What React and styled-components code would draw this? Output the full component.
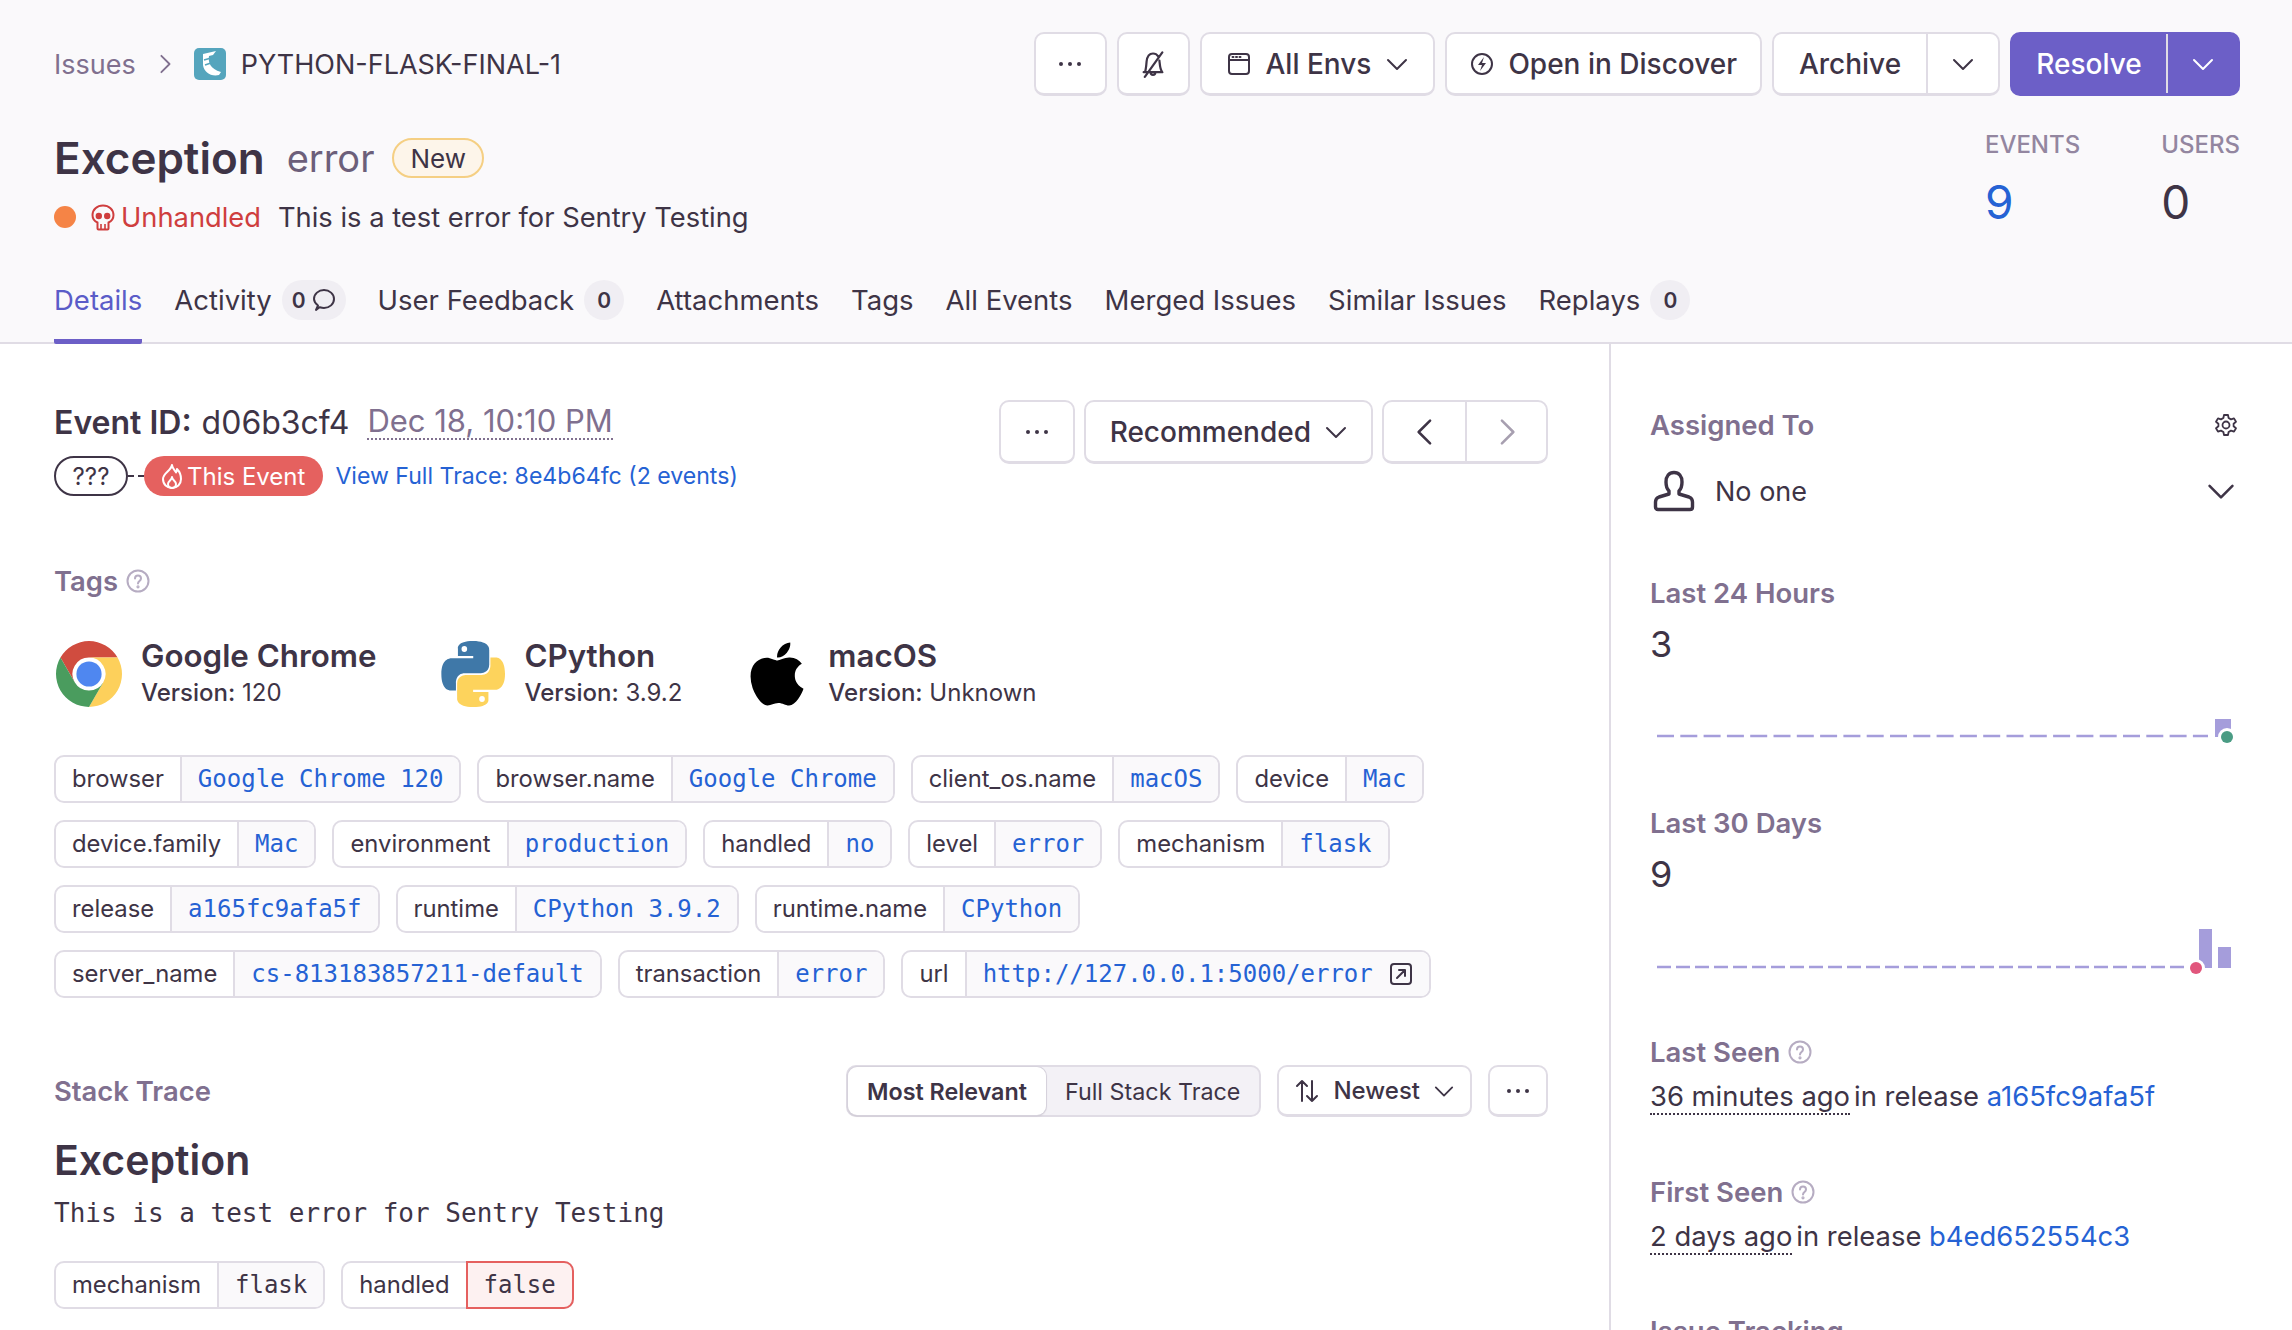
import React from 'react'
import styled, { createGlobalStyle } from 'styled-components'
import { FaApple } from 'react-icons/fa'

const text = '#3e3446'
const sub = '#80708f'
const line = '#e0dce5'
const blue = '#2562d4'
const purple = '#6c5fc7'
const mono = `'DejaVu Sans Mono', 'Liberation Mono', monospace`

const Global = createGlobalStyle`
  html, body { margin: 0; padding: 0; background: #fff; }
  body { font-family: Inter, Roboto, sans-serif; color: ${text}; }
  * { box-sizing: border-box; }
`

const Page = styled.div`
  width: 2292px;
  height: 1330px;
  overflow: hidden;
  display: flex;
  flex-direction: column;
`
const Header = styled.header`
  height: 344px;
  flex: none;
  background: #faf9fb;
  border-bottom: 2px solid ${line};
  padding: 32px 52px 0 54px;
  display: flex;
  flex-direction: column;
`
const TopRow = styled.div`
  display: flex;
  justify-content: space-between;
  align-items: center;
  height: 64px;
`
const Crumbs = styled.div`
  display: flex;
  align-items: center;
  gap: 19px;
  font-size: 27px;
`
const CrumbLink = styled.span`
  color: ${sub};
`
const CrumbTitle = styled.span`
  margin-left: -4px;
`
const Actions = styled.div`
  display: flex;
  gap: 10px;
`
const Button = styled.div`
  height: ${p => p.$h || 64}px;
  width: ${p => (p.$w ? `${p.$w}px` : 'auto')};
  padding: 0 ${p => (p.$w ? 0 : p.$pad || 22)}px;
  display: flex;
  align-items: center;
  justify-content: center;
  gap: ${p => p.$gap || 14}px;
  background: #fff;
  border: 2px solid ${line};
  border-bottom-width: 3px;
  border-radius: 10px;
  font-size: ${p => p.$fs || 28}px;
  font-weight: 500;
  color: ${text};
  white-space: nowrap;
`
const Split = styled.div`
  display: flex;
  height: 64px;
  border: 2px solid ${p => (p.$primary ? purple : line)};
  border-bottom-width: 3px;
  border-radius: 10px;
  overflow: hidden;
  background: ${p => (p.$primary ? purple : '#fff')};
  color: ${p => (p.$primary ? '#fff' : text)};
  font-size: 28px;
  font-weight: 500;
`
const SplitPart = styled.div`
  width: ${p => p.$w}px;
  display: flex;
  align-items: center;
  justify-content: center;
  color: ${p => (p.$muted ? '#a79fb0' : 'inherit')};
  & + & {
    border-left: 2px solid ${p => (p.$dark ? '#5b4fb0' : line)};
  }
`
const TitleRow = styled.div`
  display: flex;
  justify-content: space-between;
  margin-top: 28px;
`
const TitleStack = styled.div`
  display: flex;
  flex-direction: column;
  padding-top: 12px;
`
const TitleLine = styled.div`
  display: flex;
  align-items: center;
  height: 44px;
`
const Title = styled.h1`
  margin: 0;
  font-size: 44px;
  font-weight: 600;
  line-height: 44px;
`
const TitleType = styled.span`
  margin-left: 22px;
  font-size: 38px;
  color: #6c5f7a;
`
const NewBadge = styled.span`
  margin-left: 18px;
  height: 40px;
  padding: 0 16px;
  display: flex;
  align-items: center;
  border: 2px solid #f5cf83;
  border-radius: 20px;
  background: #fdf5ea;
  font-size: 26px;
`
const MessageLine = styled.div`
  display: flex;
  align-items: center;
  height: 40px;
  margin-top: 17px;
  font-size: 27.3px;
`
const Dot = styled.span`
  width: 22px;
  height: 22px;
  border-radius: 50%;
  background: #f58446;
`
const Unhandled = styled.span`
  display: flex;
  align-items: center;
  gap: 6px;
  margin-left: 15px;
  color: #cf3e3e;
`
const MessageText = styled.span`
  margin-left: 17px;
`
const Stats = styled.div`
  display: flex;
  gap: 81px;
  margin-top: 6px;
`
const Stat = styled.div`
  display: flex;
  flex-direction: column;
`
const StatLabel = styled.span`
  font-size: 24px;
  font-weight: 500;
  color: #9386a0;
  line-height: 30px;
`
const StatValue = styled.span`
  margin-top: 14px;
  font-size: 46px;
  line-height: 56px;
  color: ${p => (p.$link ? blue : text)};
`
const Tabs = styled.nav`
  display: flex;
  gap: 32px;
  margin-top: auto;
  height: 79px;
  margin-bottom: -2px;
`
const Tab = styled.div`
  display: flex;
  align-items: center;
  height: 79px;
  padding-bottom: 4px;
  font-size: 27.5px;
  white-space: nowrap;
  color: ${p => (p.$active ? '#5a5cc8' : text)};
  border-bottom: ${p => (p.$active ? `5px solid ${purple}` : '5px solid transparent')};
  border-radius: 0 0 2px 2px;
`
const TabChip = styled.span`
  margin-left: 10px;
  height: 40px;
  min-width: 40px;
  padding: 0 10px;
  display: flex;
  align-items: center;
  justify-content: center;
  gap: 6px;
  border-radius: 20px;
  background: #f0eef3;
  font-size: 21px;
  font-weight: 600;
`
const Body = styled.div`
  flex: 1;
  display: flex;
  min-height: 0;
`
const Main = styled.main`
  width: 1611px;
  flex: none;
  border-right: 2px solid ${line};
  padding: 0 61px 0 54px;
`
const EventBar = styled.div`
  display: flex;
  justify-content: space-between;
  margin-top: 56px;
  height: 96px;
`
const EventInfo = styled.div`
  display: flex;
  flex-direction: column;
  padding-top: 1px;
`
const EventLine = styled.div`
  display: flex;
  align-items: center;
  height: 42px;
  font-size: 32px;
`
const EventLabel = styled.b`
  font-weight: 600;
`
const EventId = styled.span`
  margin-left: 10px;
`
const EventDate = styled.span`
  margin-left: 18px;
  font-size: 31px;
  color: ${sub};
  border-bottom: 2px dotted ${sub};
  line-height: 34px;
`
const TraceLine = styled.div`
  display: flex;
  align-items: center;
  height: 40px;
  margin-top: 13px;
  font-size: 24px;
`
const UnknownPill = styled.span`
  width: 74px;
  height: 40px;
  display: flex;
  align-items: center;
  justify-content: center;
  border: 2px solid ${text};
  border-radius: 20px;
`
const Connector = styled.span`
  width: 16px;
  border-top: 2px dashed ${text};
`
const EventPill = styled.span`
  height: 40px;
  padding: 0 18px;
  display: flex;
  align-items: center;
  gap: 5px;
  border-radius: 20px;
  background: #e5615f;
  color: #fff;
`
const Link = styled.span`
  color: ${blue};
`
const TraceLink = styled(Link)`
  margin-left: 12px;
  font-size: 23.1px;
`
const EventButtons = styled.div`
  display: flex;
  gap: 9px;
`
const SectionHead = styled.h3`
  margin: ${p => p.$top}px 0 0;
  display: flex;
  align-items: center;
  gap: 8px;
  height: 32px;
  font-size: 27.4px;
  font-weight: 600;
  color: ${sub};
`
const Contexts = styled.div`
  display: flex;
  margin-top: 43px;
  height: 68px;
`
const Context = styled.div`
  display: flex;
  align-items: center;
  gap: ${p => p.$gap}px;
  margin-right: ${p => p.$mr}px;
  margin-left: ${p => p.$ml || 0}px;
`
const ContextText = styled.div`
  display: flex;
  flex-direction: column;
`
const ContextName = styled.span`
  font-size: 31.3px;
  font-weight: 600;
  line-height: 38px;
`
const ContextVersion = styled.span`
  font-size: 24px;
  line-height: 36px;
  & b { font-weight: 500; }
`
const TagList = styled.div`
  display: flex;
  flex-wrap: wrap;
  gap: 17px 16px;
  margin-top: ${p => p.$top}px;
`
const TagChip = styled.div`
  display: flex;
  height: 48px;
  border: 2px solid ${line};
  border-radius: 10px;
  overflow: hidden;
  font-size: 23.8px;
  line-height: 44px;
`
const TagKey = styled.span`
  padding: 0 16px;
  border-right: 2px solid ${line};
  white-space: nowrap;
`
const TagValue = styled.span`
  padding: 0 16px;
  display: flex;
  align-items: center;
  gap: 16px;
  background: #faf9fb;
  font-family: ${mono};
  font-size: 24px;
  color: ${blue};
  white-space: nowrap;
`
const PlainValue = styled(TagValue)`
  color: ${text};
`
const ErrorChip = styled(TagChip)`
  overflow: visible;
`
const ErrorKey = styled(TagKey)`
  border-right: 0;
`
const ErrorValue = styled(TagValue)`
  color: ${text};
  background: #fdf1f1;
  margin: -2px -2px -2px 0;
  height: 48px;
  padding: 0 16px;
  border: 2px solid #e5605f;
  border-radius: 0 10px 10px 0;
`
const TraceBar = styled.div`
  display: flex;
  align-items: center;
  justify-content: space-between;
  margin-top: 67px;
  height: 52px;
`
const TraceHead = styled(SectionHead)`
  margin: 0;
`
const TraceTools = styled.div`
  display: flex;
  gap: 16px;
`
const Segment = styled.div`
  display: flex;
  height: 52px;
  border: 2px solid ${line};
  border-radius: 10px;
  background: #f3f1f6;
  font-size: 23.3px;
`
const SegmentItem = styled.div`
  display: flex;
  align-items: center;
  padding: 0 19px;
  font-weight: ${p => (p.$on ? 600 : 400)};
  background: ${p => (p.$on ? '#fff' : 'transparent')};
  border-radius: 9px;
  box-shadow: ${p => (p.$on ? '0 0 0 1px #d6d2dc, 0 1px 2px rgba(43,34,51,.2)' : 'none')};
`
const ExceptionTitle = styled.h2`
  margin: 19px 0 0;
  font-size: 41px;
  font-weight: 600;
  line-height: 48px;
`
const ExceptionMessage = styled.p`
  margin: 12px 0 0;
  font-family: ${mono};
  font-size: 26px;
  line-height: 34px;
`
const Side = styled.aside`
  flex: 1;
  padding: 0 52px 0 39px;
`
const SideSection = styled.section`
  margin-top: ${p => p.$top}px;
`
const SideHead = styled.div`
  display: flex;
  align-items: center;
  justify-content: space-between;
  height: 32px;
  padding-right: 2px;
`
const SideTitle = styled.span`
  display: flex;
  align-items: center;
  gap: 8px;
  font-size: 27.5px;
  font-weight: 600;
  color: ${sub};
`
const Assignee = styled.div`
  display: flex;
  align-items: center;
  height: 44px;
  margin-top: 28px;
  padding: 0 5px 0 3px;
  font-size: 27px;
`
const AssigneeName = styled.span`
  margin-left: 20px;
  flex: 1;
`
const SideCount = styled.div`
  margin-top: 13px;
  font-size: 36px;
  line-height: 44px;
`
const Sparkline = styled.svg`
  display: block;
  margin-top: ${p => p.$top}px;
`
const SeenLine = styled.div`
  margin-top: 11px;
  font-size: 27.4px;
  line-height: 34px;
  white-space: nowrap;
`
const Ago = styled.span`
  border-bottom: 2px dotted ${text};
  margin-right: 4px;
`
const Icon = styled.svg`
  flex: none;
  display: block;
`

const Chevron = ({ dir = 'down', size = 22, color = 'currentColor' }) => {
  const d = {
    down: 'M2 7 L11 16 L20 7',
    left: 'M15 2 L6 11 L15 20',
    right: 'M7 2 L16 11 L7 20',
  }[dir]
  return (
    <Icon width={size} height={size} viewBox="0 0 22 22" fill="none" stroke={color} strokeWidth="2" strokeLinecap="round" strokeLinejoin="round">
      <path d={d} />
    </Icon>
  )
}
const Ellipsis = () => (
  <Icon width="24" height="6" viewBox="0 0 24 6" fill={text}>
    <circle cx="3" cy="3" r="2" /><circle cx="12" cy="3" r="2" /><circle cx="21" cy="3" r="2" />
  </Icon>
)
const BellOff = () => (
  <Icon width="28" height="28" viewBox="0 0 24 24" fill="none" stroke={text} strokeWidth="1.9" strokeLinecap="round" strokeLinejoin="round">
    <path d="M5 19 C6 17 6 15 6.5 10 C7 5 9 3 12 3 C14 3 15.5 4 16.5 5.5 M17.5 9 C18 14 18 17 20 19 H4 M10 19 C10 22 14 22 14 19 M20 2 L5 23" />
  </Icon>
)
const Calendar = () => (
  <Icon width="24" height="24" viewBox="0 0 24 24" fill="none" stroke={text} strokeWidth="2">
    <rect x="2" y="2" width="20" height="20" rx="3" />
    <path d="M2 8 H22" />
    <path d="M5.5 5 H6.5 M9 5 H10 M12.5 5 H13.5" strokeLinecap="round" />
  </Icon>
)
const Discover = () => (
  <Icon width="24" height="24" viewBox="0 0 24 24" fill="none" stroke={text} strokeWidth="2">
    <circle cx="12" cy="12" r="10" />
    <path d="M14 5 L8 13 H12 L10 19 L16 11 H12 Z" fill={text} stroke="none" />
  </Icon>
)
const Skull = () => (
  <Icon width="24" height="27" viewBox="0 0 24 27" fill="none" stroke="#cf3e3e" strokeWidth="2" strokeLinejoin="round">
    <path d="M12 1.5 C6 1.5 1.5 5.5 1.5 11 C1.5 14.5 3 17 6.5 18.5 V24.5 C6.5 25 7 25.5 7.5 25.5 H16.5 C17 25.5 17.5 25 17.5 24.5 V18.5 C21 17 22.5 14.5 22.5 11 C22.5 5.5 18 1.5 12 1.5 Z" />
    <circle cx="7.8" cy="12" r="2.2" fill="#cf3e3e" />
    <circle cx="16.2" cy="12" r="2.2" fill="#cf3e3e" />
    <path d="M10 20 V25 M14 20 V25" strokeWidth="1.6" />
  </Icon>
)
const Comment = () => (
  <Icon width="24" height="24" viewBox="0 0 24 24" fill="none" stroke={text} strokeWidth="2" strokeLinejoin="round">
    <path d="M4 22 L6 17.5 C3.5 15.5 2 13.5 2 11 C2 6 6.5 2 12 2 C17.5 2 22 6 22 11 C22 16 17.5 20 12 20 C10 20 8.5 19.5 7.5 19.2 Z" />
  </Icon>
)
const Flame = () => (
  <Icon width="20" height="25" viewBox="0 0 20 25" fill="none" stroke="#fff" strokeWidth="2" strokeLinejoin="round">
    <path d="M10 1 C10.5 5 13 6 14 8.5 C15 7 15 6 15 5 C18 8 19 12 19 15 C19 20.5 15 24 10 24 C5 24 1 20.5 1 15 C1 9 9 7 10 1 Z" />
    <path d="M10 13 C10 16 14 17 14 20 C14 22.5 12 24 10 24 C8 24 6 22.5 6 20 C6 17 10 16 10 13 Z" />
  </Icon>
)
const Help = ({ size = 24 }) => (
  <Icon width={size} height={size} viewBox="0 0 24 24" fill="none" stroke="#b6acc2" strokeWidth="2" strokeLinecap="round">
    <circle cx="12" cy="12" r="10.5" />
    <path d="M9 9.5 C9 7.5 10.5 6.5 12 6.5 C13.5 6.5 15 7.5 15 9.5 C15 12 12 12 12 14.5" />
    <circle cx="12" cy="17.8" r="0.6" />
  </Icon>
)
const Sort = () => (
  <Icon width="24" height="24" viewBox="0 0 24 24" fill="none" stroke={text} strokeWidth="2" strokeLinecap="round" strokeLinejoin="round">
    <path d="M7 22 V2 M2 7 L7 2 L12 7 M17 2 V22 M12 17 L17 22 L22 17" />
  </Icon>
)
const OpenLink = () => (
  <Icon width="24" height="24" viewBox="0 0 24 24" fill="none" stroke={text} strokeWidth="2" strokeLinecap="round" strokeLinejoin="round">
    <rect x="2" y="2" width="20" height="20" rx="3" />
    <path d="M8 16 L16 8 M10 8 H16 V14" />
  </Icon>
)
const Gear = () => (
  <Icon width="24" height="24" viewBox="0 0 24 24" fill="none" stroke={text} strokeWidth="1.8" strokeLinejoin="round">
    <path d="M10 2 H14 L14.6 5 L17 6.4 L20 5.4 L22 8.8 L19.6 10.8 V13.2 L22 15.2 L20 18.6 L17 17.6 L14.6 19 L14 22 H10 L9.4 19 L7 17.6 L4 18.6 L2 15.2 L4.4 13.2 V10.8 L2 8.8 L4 5.4 L7 6.4 L9.4 5 Z" />
    <circle cx="12" cy="12" r="3.5" />
  </Icon>
)
const User = () => (
  <Icon width="42" height="42" viewBox="0 0 42 42" fill="none" stroke={text} strokeWidth="3.4" strokeLinejoin="round">
    <path d="M13 12 C13 6 16 2.5 21 2.5 C26 2.5 29 6 29 12 C29 16 28 19 26 21 V24 L36 27 C38.5 28 39.5 29.5 39.5 32 V37 C39.5 38.5 38.5 39.5 37 39.5 H5 C3.5 39.5 2.5 38.5 2.5 37 V32 C2.5 29.5 3.5 28 6 27 L16 24 V21 C14 19 13 16 13 12 Z" />
  </Icon>
)
const FlaskLogo = () => (
  <Icon width="32" height="32" viewBox="0 0 32 32">
    <rect width="32" height="32" rx="5" fill="#55a5bd" />
    <path d="M9 6 L22 3 L19 7 L15 8 C14 14 16 21 27 24 L25 27 C17 29 10 24 9 17 Z" fill="#fff" />
    <path d="M10 12 L17 10 M11 17 L17 15" stroke="#55a5bd" strokeWidth="1.6" />
  </Icon>
)
const ChromeLogo = () => (
  <Icon width="66" height="66" viewBox="2 2 44 44">
    <path d="M4.95 13 A22 22 0 0 1 43.05 13 H24 A11 11 0 0 0 14.47 29.5 Z" fill="#d04c3f" />
    <path d="M43.05 13 A22 22 0 0 1 24 46 L33.53 29.5 A11 11 0 0 0 24 13 Z" fill="#fdd05b" />
    <path d="M24 46 A22 22 0 0 1 4.95 13 L14.47 29.5 A11 11 0 0 0 33.53 29.5 Z" fill="#4a9c5e" />
    <circle cx="24" cy="24" r="10.5" fill="#fff" />
    <circle cx="24" cy="24" r="8.4" fill="#4f87f0" />
  </Icon>
)
const PythonLogo = () => (
  <Icon width="64" height="66" viewBox="0 0 110 110" preserveAspectRatio="none">
    <path d="M54.9 0C26.8.1 29.1 12.3 29.1 12.3l0 12.6h26.3v3.8H18.6S.6 26.7.6 55.1c0 28.4 15.7 27.4 15.7 27.4h9.4V69.3s-.5-15.7 15.5-15.7h26.7s15 .2 15-14.5V14.8S85.2 0 54.9 0zM40.1 8.5a4.8 4.8 0 110 9.7 4.8 4.8 0 010-9.7z" fill="#3f78a8" />
    <path d="M55.7 110c28.1 0 25.8-12.2 25.8-12.2V85.2H55.2v-3.8h36.8s18 2 18-26.4c0-28.4-15.7-27.4-15.7-27.4h-9.4v13.2s.5 15.7-15.5 15.7H42.7s-15-.2-15 14.5v24.3S25.4 110 55.7 110zM70.5 101.5a4.8 4.8 0 110-9.7 4.8 4.8 0 010 9.7z" fill="#fdd35c" />
  </Icon>
)

const Spark = ({ top, height, base, dashEnd, dash, bars, dot, dotColor }) => (
  <Sparkline $top={top} width="590" height={height} viewBox={`0 0 590 ${height}`}>
    <path d={`M7 ${base} H${dashEnd}`} stroke="#a59ddb" strokeWidth="2.5" strokeDasharray={dash} fill="none" />
    {bars.map(b => <rect key={b.x} x={b.x} y={b.y} width={b.w} height={base - b.y + 1} fill="#a59ddb" />)}
    <circle cx={dot} cy={base + 1} r="9" fill="#fff" />
    <circle cx={dot} cy={base + 1} r="6" fill={dotColor} />
  </Sparkline>
)

const tags = [
  ['browser', 'Google Chrome 120'],
  ['browser.name', 'Google Chrome'],
  ['client_os.name', 'macOS'],
  ['device', 'Mac'],
  ['device.family', 'Mac'],
  ['environment', 'production'],
  ['handled', 'no'],
  ['level', 'error'],
  ['mechanism', 'flask'],
  ['release', 'a165fc9afa5f'],
  ['runtime', 'CPython 3.9.2'],
  ['runtime.name', 'CPython'],
  ['server_name', 'cs-813183857211-default'],
  ['transaction', 'error'],
  ['url', 'http://127.0.0.1:5000/error'],
]

export default function App() {
  return (
    <Page>
      <Global />
      <Header>
        <TopRow>
          <Crumbs>
            <CrumbLink>Issues</CrumbLink>
            <Chevron dir="right" size={20} color={sub} />
            <FlaskLogo />
            <CrumbTitle>PYTHON-FLASK-FINAL-1</CrumbTitle>
          </Crumbs>
          <Actions>
            <Button $w={73}><Ellipsis /></Button>
            <Button $w={73}><BellOff /></Button>
            <Button $pad={25} $gap={15}><Calendar />All Envs<Chevron /></Button>
            <Button $pad={23}><Discover />Open in Discover</Button>
            <Split>
              <SplitPart $w={152}>Archive</SplitPart>
              <SplitPart $w={72}><Chevron /></SplitPart>
            </Split>
            <Split $primary>
              <SplitPart $w={154}>Resolve</SplitPart>
              <SplitPart $w={72} $dark><Chevron /></SplitPart>
            </Split>
          </Actions>
        </TopRow>
        <TitleRow>
          <TitleStack>
            <TitleLine>
              <Title>Exception</Title>
              <TitleType>error</TitleType>
              <NewBadge>New</NewBadge>
            </TitleLine>
            <MessageLine>
              <Dot />
              <Unhandled><Skull />Unhandled</Unhandled>
              <MessageText>This is a test error for Sentry Testing</MessageText>
            </MessageLine>
          </TitleStack>
          <Stats>
            <Stat><StatLabel>EVENTS</StatLabel><StatValue $link>9</StatValue></Stat>
            <Stat><StatLabel>USERS</StatLabel><StatValue>0</StatValue></Stat>
          </Stats>
        </TitleRow>
        <Tabs>
          <Tab $active>Details</Tab>
          <Tab>Activity<TabChip>0<Comment /></TabChip></Tab>
          <Tab>User Feedback<TabChip>0</TabChip></Tab>
          <Tab>Attachments</Tab>
          <Tab>Tags</Tab>
          <Tab>All Events</Tab>
          <Tab>Merged Issues</Tab>
          <Tab>Similar Issues</Tab>
          <Tab>Replays<TabChip>0</TabChip></Tab>
        </Tabs>
      </Header>
      <Body>
        <Main>
          <EventBar>
            <EventInfo>
              <EventLine>
                <EventLabel>Event ID:</EventLabel>
                <EventId>d06b3cf4</EventId>
                <EventDate>Dec 18, 10:10 PM</EventDate>
              </EventLine>
              <TraceLine>
                <UnknownPill>???</UnknownPill>
                <Connector />
                <EventPill><Flame />This Event</EventPill>
                <TraceLink>View Full Trace: 8e4b64fc (2 events)</TraceLink>
              </TraceLine>
            </EventInfo>
            <EventButtons>
              <Button $w={76}><Ellipsis /></Button>
              <Button $pad={24}>Recommended<Chevron /></Button>
              <Split>
                <SplitPart $w={81}><Chevron dir="left" size={28} /></SplitPart>
                <SplitPart $w={81} $muted><Chevron dir="right" size={28} /></SplitPart>
              </Split>
            </EventButtons>
          </EventBar>
          <SectionHead $top={69}>Tags <Help /></SectionHead>
          <Contexts>
            <Context $gap={19} $mr={65} $ml={2}>
              <ChromeLogo />
              <ContextText>
                <ContextName>Google Chrome</ContextName>
                <ContextVersion><b>Version:</b> 120</ContextVersion>
              </ContextText>
            </Context>
            <Context $gap={19} $mr={59}>
              <PythonLogo />
              <ContextText>
                <ContextName>CPython</ContextName>
                <ContextVersion><b>Version:</b> 3.9.2</ContextVersion>
              </ContextText>
            </Context>
            <Context $gap={15} $mr={0}>
              <FaApple size={72} color="#000" />
              <ContextText>
                <ContextName>macOS</ContextName>
                <ContextVersion><b>Version:</b> Unknown</ContextVersion>
              </ContextText>
            </Context>
          </Contexts>
          <TagList $top={47}>
            {tags.map(([k, v]) => (
              <TagChip key={k}>
                <TagKey>{k}</TagKey>
                <TagValue>{v}{k === 'url' && <OpenLink />}</TagValue>
              </TagChip>
            ))}
          </TagList>
          <TraceBar>
            <TraceHead>Stack Trace</TraceHead>
            <TraceTools>
              <Segment>
                <SegmentItem $on>Most Relevant</SegmentItem>
                <SegmentItem>Full Stack Trace</SegmentItem>
              </Segment>
              <Button $h={52} $fs={24} $pad={16}><Sort />Newest<Chevron size={20} /></Button>
              <Button $h={52} $w={60}><Ellipsis /></Button>
            </TraceTools>
          </TraceBar>
          <ExceptionTitle>Exception</ExceptionTitle>
          <ExceptionMessage>This is a test error for Sentry Testing</ExceptionMessage>
          <TagList $top={31}>
            <TagChip>
              <TagKey>mechanism</TagKey>
              <PlainValue>flask</PlainValue>
            </TagChip>
            <ErrorChip>
              <ErrorKey>handled</ErrorKey>
              <ErrorValue>false</ErrorValue>
            </ErrorChip>
          </TagList>
        </Main>
        <Side>
          <SideSection $top={65}>
            <SideHead><SideTitle>Assigned To</SideTitle><Gear /></SideHead>
          </SideSection>
          <Assignee>
            <User />
            <AssigneeName>No one</AssigneeName>
            <Chevron size={28} />
          </Assignee>
          <SideSection $top={64}>
            <SideHead><SideTitle>Last 24 Hours</SideTitle></SideHead>
            <SideCount>3</SideCount>
            <Spark top={45} height={40} base={25} dashEnd={558} dash="17 6.3"
              bars={[{ x: 565, y: 8, w: 16 }]} dot={577} dotColor="#4a9c84" />
          </SideSection>
          <SideSection $top={56}>
            <SideHead><SideTitle>Last 30 Days</SideTitle></SideHead>
            <SideCount>9</SideCount>
            <Spark top={24} height={60} base={47} dashEnd={540} dash="14 5"
              bars={[{ x: 549, y: 9, w: 13 }, { x: 568, y: 27, w: 13 }]} dot={546} dotColor="#e1567c" />
          </SideSection>
          <SideSection $top={56}>
            <SideHead><SideTitle>Last Seen <Help /></SideTitle></SideHead>
            <SeenLine><Ago>36 minutes ago</Ago>in release <Link>a165fc9afa5f</Link></SeenLine>
          </SideSection>
          <SideSection $top={63}>
            <SideHead><SideTitle>First Seen <Help /></SideTitle></SideHead>
            <SeenLine><Ago>2 days ago</Ago>in release <Link>b4ed652554c3</Link></SeenLine>
          </SideSection>
          <SideSection $top={62}>
            <SideHead><SideTitle>Issue Tracking</SideTitle></SideHead>
          </SideSection>
        </Side>
      </Body>
    </Page>
  )
}
